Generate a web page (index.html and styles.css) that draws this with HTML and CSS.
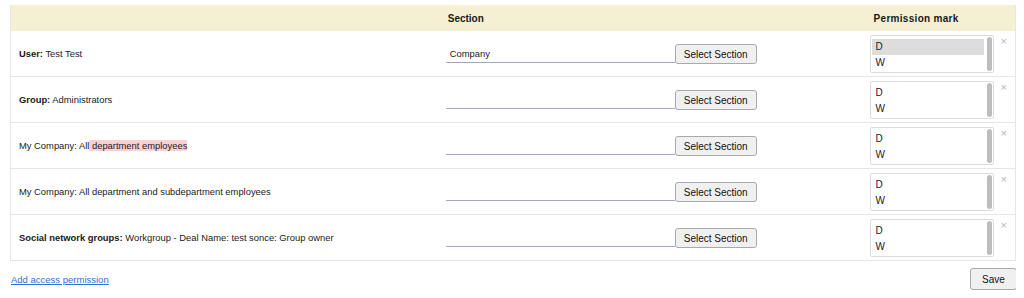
FILE: index.html
```html
<!DOCTYPE html>
<html lang="en">
<head>
  <meta charset="UTF-8">
  <title>Access permissions</title>
  <link rel="stylesheet" href="styles.css">
</head>
<body>
  <table class="perm-table">
    <thead>
      <tr>
        <th class="col-name"></th>
        <th class="col-section">Section</th>
        <th class="col-mark">Permission mark</th>
      </tr>
    </thead>
    <tbody>
      <tr>
        <td><b>User:</b> Test Test</td>
        <td>
          <div class="section-cell">
            <input class="section-input" type="text" value="Company">
            <button class="btn">Select Section</button>
          </div>
        </td>
        <td>
          <div class="mark-cell">
            <div class="listbox">
              <div class="options">
                <div class="option selected">D</div>
                <div class="option">W</div>
              </div>
              <div class="scroll"></div>
            </div>
            <span class="remove">&times;</span>
          </div>
        </td>
      </tr>
      <tr>
        <td><b>Group:</b> Administrators</td>
        <td>
          <div class="section-cell">
            <input class="section-input" type="text" value="">
            <button class="btn">Select Section</button>
          </div>
        </td>
        <td>
          <div class="mark-cell">
            <div class="listbox">
              <div class="options">
                <div class="option">D</div>
                <div class="option">W</div>
              </div>
              <div class="scroll"></div>
            </div>
            <span class="remove">&times;</span>
          </div>
        </td>
      </tr>
      <tr>
        <td>My Company: All<span class="hl"> department employees</span></td>
        <td>
          <div class="section-cell">
            <input class="section-input" type="text" value="">
            <button class="btn">Select Section</button>
          </div>
        </td>
        <td>
          <div class="mark-cell">
            <div class="listbox">
              <div class="options">
                <div class="option">D</div>
                <div class="option">W</div>
              </div>
              <div class="scroll"></div>
            </div>
            <span class="remove">&times;</span>
          </div>
        </td>
      </tr>
      <tr>
        <td>My Company: All department and subdepartment employees</td>
        <td>
          <div class="section-cell">
            <input class="section-input" type="text" value="">
            <button class="btn">Select Section</button>
          </div>
        </td>
        <td>
          <div class="mark-cell">
            <div class="listbox">
              <div class="options">
                <div class="option">D</div>
                <div class="option">W</div>
              </div>
              <div class="scroll"></div>
            </div>
            <span class="remove">&times;</span>
          </div>
        </td>
      </tr>
      <tr>
        <td><b>Social network groups:</b> Workgroup - Deal Name: test sonce: Group owner</td>
        <td>
          <div class="section-cell">
            <input class="section-input" type="text" value="">
            <button class="btn">Select Section</button>
          </div>
        </td>
        <td>
          <div class="mark-cell">
            <div class="listbox">
              <div class="options">
                <div class="option">D</div>
                <div class="option">W</div>
              </div>
              <div class="scroll"></div>
            </div>
            <span class="remove">&times;</span>
          </div>
        </td>
      </tr>
    </tbody>
  </table>
  <div class="footer">
    <a href="#" class="add-link">Add access permission</a>
    <button class="btn save-btn">Save</button>
  </div>
</body>
</html>
```

FILE: styles.css
```css
:root {
  --head-bg: #f5efd3;
  --row-line: #e6e6e6;
  --text: #1a1a1a;
  --link: #2f6fd8;
  --sm: 9.4px;
  --md: 10px;
}
body {
  margin: 5px 8px 0 10px;
  font-family: 'Liberation Sans', Arial, sans-serif;
  font-size: var(--sm);
  color: var(--text);
}
.perm-table {
  width: 1006px;
  border-collapse: collapse;
  border-left: 1px solid var(--row-line);
  border-right: 1px solid var(--row-line);
}
.perm-table th {
  background: var(--head-bg);
  height: 26px;
  padding: 0 9px 0 11px;
  text-align: left;
  font-weight: bold;
  font-size: var(--md);
}
.perm-table th.col-mark {
  padding-left: 15px;
  letter-spacing: 0.3px;
}
.col-name { width: 409px; }
.col-section { width: 403px; }
.perm-table td {
  height: 45px;
  padding: 0 8px;
  border-bottom: 1px solid var(--row-line);
  vertical-align: middle;
}
.hl {
  background: #fbd0d3;
}
.section-cell {
  display: flex;
  align-items: center;
  padding-left: 1px;
  padding-top: 1px;
}
.section-input {
  width: 229px;
  height: 17px;
  padding: 0 4px;
  box-sizing: border-box;
  border: none;
  border-bottom: 1px solid #a6a6c2;
  font-family: inherit;
  font-size: var(--sm);
  color: var(--text);
  outline: none;
}
.btn {
  height: 20px;
  padding: 0 8px;
  background: #f0f0f0;
  border: 1px solid #a9a9a9;
  border-radius: 3px;
  font-family: inherit;
  font-size: var(--md);
  color: #111;
}
.mark-cell {
  display: flex;
  align-items: flex-start;
  padding-left: 3px;
}
.listbox {
  width: 124px;
  height: 38px;
  box-sizing: border-box;
  border: 1px solid #dcdcdc;
  border-radius: 2px;
  display: flex;
  padding: 1px;
}
.options {
  flex: 1;
  padding-top: 2px;
}
.option {
  height: 16px;
  line-height: 16px;
  padding-left: 4px;
  font-size: var(--md);
}
.option.selected {
  background: #dddddd;
}
.scroll {
  width: 5px;
  margin-left: 3px;
  border-radius: 3px;
  background: #bdbdbd;
}
.remove {
  margin-left: 7px;
  margin-top: 0;
  color: #b8b8b8;
  font-size: 11px;
  line-height: 12px;
}
.footer {
  display: flex;
  justify-content: space-between;
  align-items: center;
  width: 1007px;
  margin-top: 7px;
}
.add-link {
  color: var(--link);
  font-size: 9.5px;
  margin-left: 1px;
}
.save-btn {
  height: 22px;
  width: 47px;
  padding: 0;
}
```
